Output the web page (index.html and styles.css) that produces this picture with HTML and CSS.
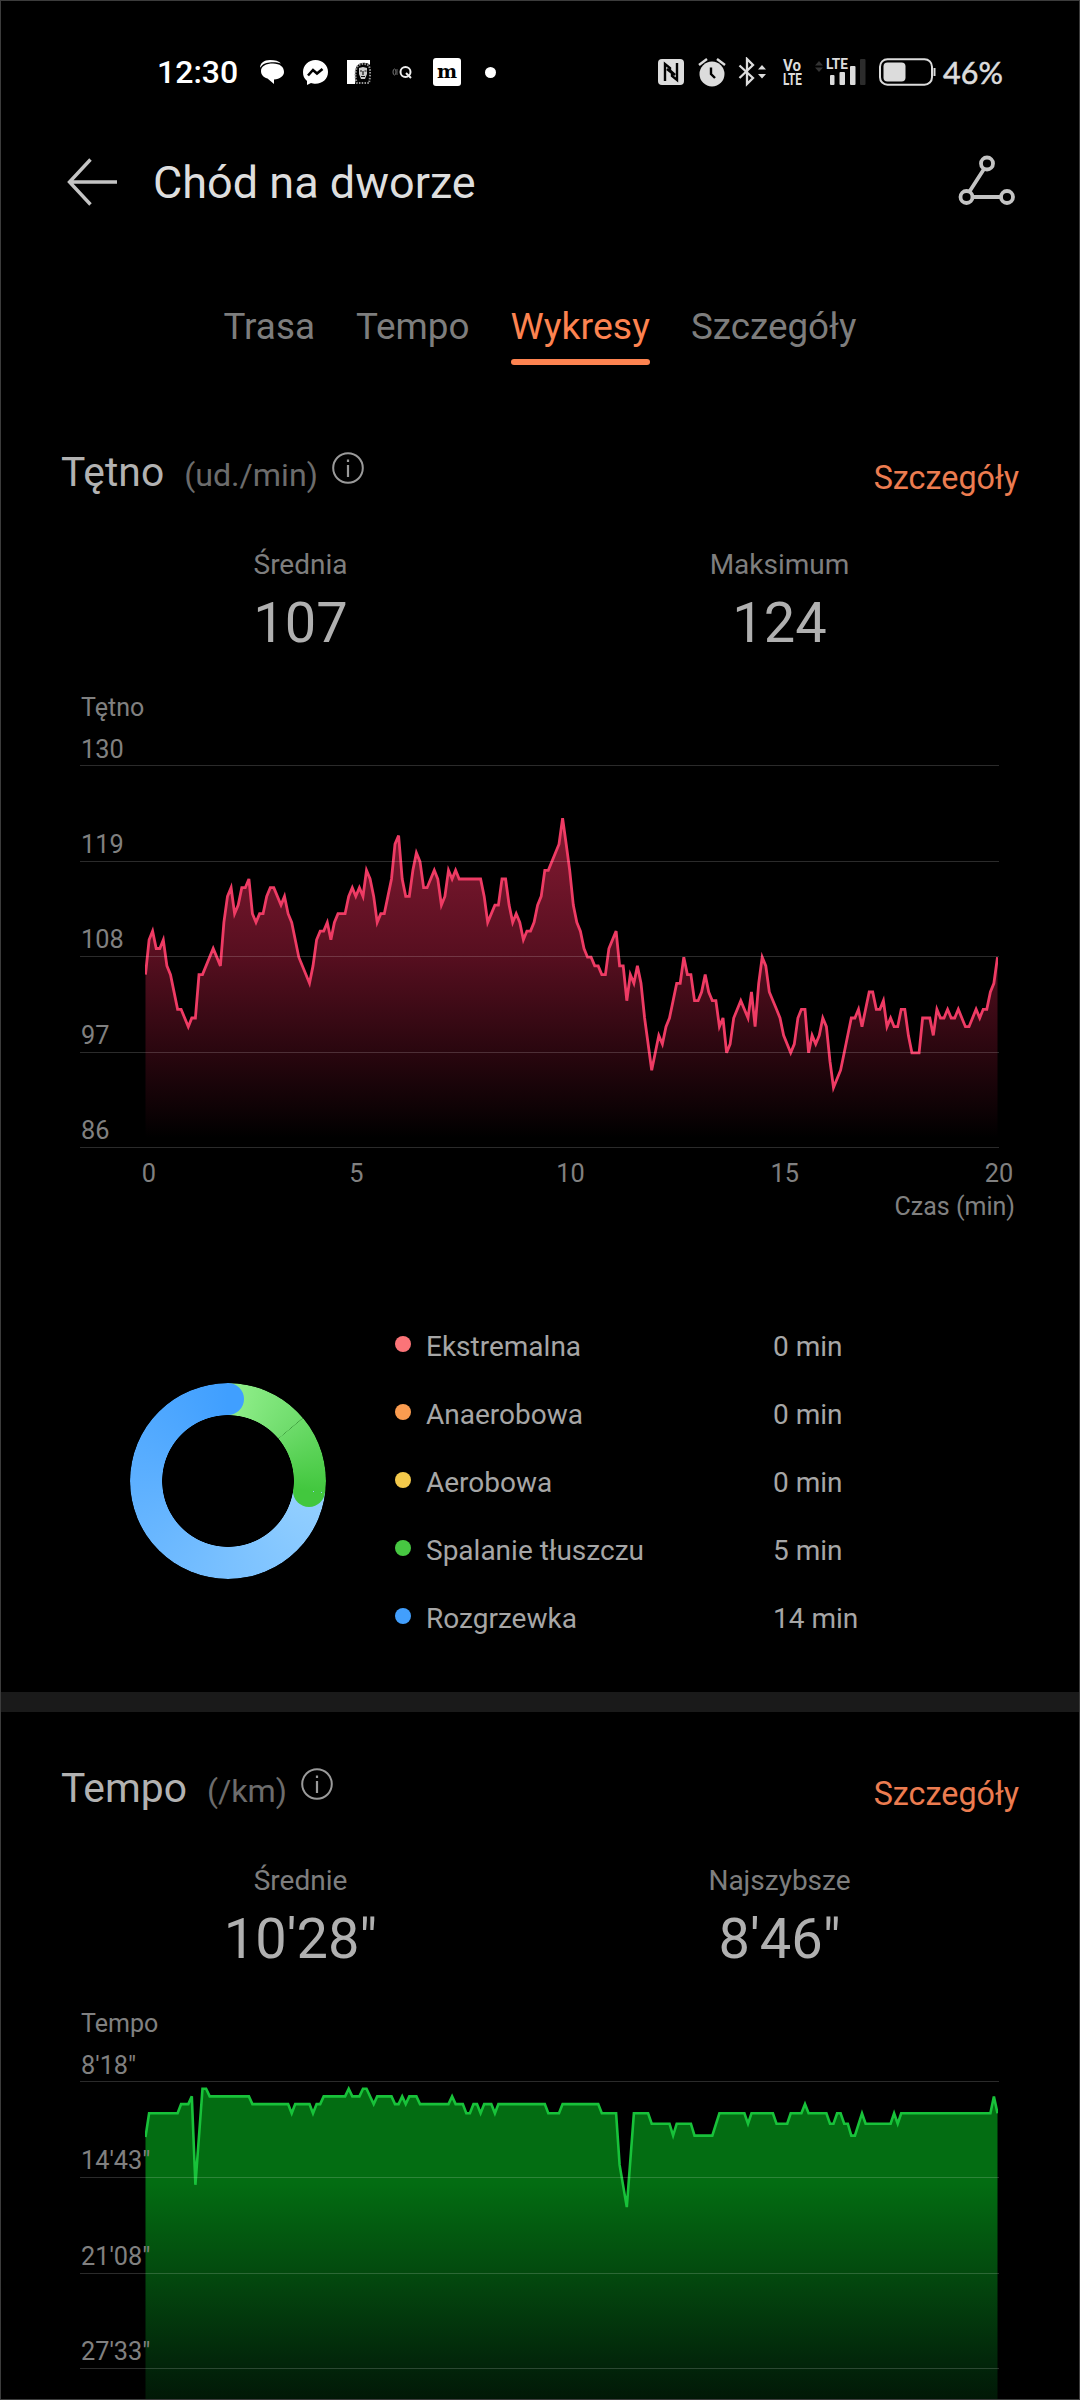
FILE: index.html
```html
<!DOCTYPE html>
<html lang="pl">
<head>
    <meta charset="UTF-8">
    <meta name="viewport" content="width=device-width, initial-scale=1.0">
    <title>Chód na dworze</title>
    <link rel="stylesheet" href="styles.css">
</head>
<body>
    <div class="status-bar">
        <div class="status-left">
            <span class="clock">12:30</span>
            <svg class="ic-chat" width="26" height="26" viewBox="0 0 26 26">
                <path d="M1 9C1 4 5 1 11 1c5 0 9 1 11 3.500C16 2.500 6 3 3 6.500 2 7.500 1.500 8 1 9z" fill="#fff"/>
                <path d="M14 4.500c7 0 11 3.500 11 8.500 0 4-4 7-10 7.500v4.500l-6.500-5.500C4 18 2 15.500 2 12c0-5 5-7.500 12-7.500z" fill="#fff"/>
            </svg>
            <svg class="ic-messenger" width="27" height="27" viewBox="0 0 27 27">
                <path d="M13.500 1C6.500 1 1 6 1 13c0 4 1 6 4 9v4l4-2c1 .5 3 .7 4.500.7C20.500 24.700 26 20 26 13S20.500 1 13.500 1z" fill="#fff"/>
                <path d="M6 16.500l5-5.500 4 3.500 5.500-4.500" fill="none" stroke="#000" stroke-width="2.600"/>
            </svg>
            <svg class="ic-lion" width="25" height="26" viewBox="0 0 25 26">
                <path d="M1 1h23v5c-3-3-10-3-13 1-3 4-1 12-2 18H1z" fill="#fff"/>
                <path d="M11 8c3-4 9-4 12-1 2 5 1 12 0 17H11c-2-5-2-11 0-16z" fill="none" stroke="#999" stroke-width="2" stroke-dasharray="1.500 1.300"/>
                <path d="M13 9l4-1 4 1v6l-2 5h-4l-2-5z" fill="#ccc"/>
                <path d="M14 12h2M18.500 12h2M17 12v4M15 17.500h4" stroke="#111" stroke-width="1.200"/>
            </svg>
            <svg class="ic-cast" width="21" height="14" viewBox="0 0 21 14">
                <ellipse cx="2.500" cy="7" rx="1.500" ry="3" fill="none" stroke="#777"/>
                <path d="M5 4v6" stroke="#666"/>
                <circle cx="13.500" cy="7" r="5" fill="none" stroke="#eee" stroke-width="2"/>
                <path d="M14 8l5 5" stroke="#eee" stroke-width="2"/>
            </svg>
            <svg class="ic-m" width="28" height="28" viewBox="0 0 28 28">
                <rect width="28" height="28" rx="3" fill="#fff"/>
                <text x="14" y="20" text-anchor="middle" class="m-letter">m</text>
            </svg>
            <span class="more-dot"></span>
        </div>
        <div class="status-right">
            <svg width="28" height="28" viewBox="0 0 28 28">
                <rect x="1" y="1" width="26" height="26" rx="4" fill="#dcdcdc"/>
                <path d="M8 23V6l5 4v2.500L18 17M20 5v17l-5-4v-3L10 11" fill="none" stroke="#000" stroke-width="2.400"/>
            </svg>
            <svg class="ic-alarm" width="28" height="29" viewBox="0 0 28 29">
                <circle cx="14" cy="16" r="12.500" fill="#dcdcdc"/>
                <path d="M1 7l8-6M27 7l-8-6" stroke="#dcdcdc" stroke-width="2.400"/>
                <path d="M13 9.500V16l4 4" fill="none" stroke="#000" stroke-width="2.400"/>
            </svg>
            <svg class="ic-bt" width="30" height="30" viewBox="0 0 30 30">
                <path d="M1.500 8.500L15 21l-6 6V2l6 6L1.500 21" fill="none" stroke="#dcdcdc" stroke-width="2.300"/>
                <path d="M20 12.500l4-4.500 4 4.500zM20 17l4 4.500 4-4.500z" fill="#dcdcdc"/>
            </svg>
            <svg class="ic-volte" width="22" height="40" viewBox="0 -6 22 40">
                <text x="1" y="12.500" class="net" textLength="18" lengthAdjust="spacingAndGlyphs">Vo</text>
                <text x="1" y="26.500" class="net" textLength="19" lengthAdjust="spacingAndGlyphs">LTE</text>
            </svg>
            <svg class="ic-signal" width="51" height="40" viewBox="0 -6 51 40">
                <path d="M0 7.500l4-4.500 4 4.500zM0 9.500l4 4.500 4-4.500z" fill="#333"/>
                <text x="11" y="11" class="net lte" textLength="22" lengthAdjust="spacingAndGlyphs">LTE</text>
                <rect x="15" y="17" width="4.500" height="10" rx="1" fill="#dcdcdc"/>
                <rect x="24.500" y="14" width="5.500" height="13" rx="1" fill="#dcdcdc"/>
                <rect x="35" y="8" width="5.500" height="19" rx="1" fill="#dcdcdc"/>
                <rect x="45" y="1" width="5.500" height="26" rx="1" fill="#2c2c2c"/>
            </svg>
            <svg class="ic-battery" width="57" height="28" viewBox="0 0 57 28">
                <rect x="1" y="1.200" width="52" height="25.500" rx="7.500" fill="none" stroke="#dcdcdc" stroke-width="2"/>
                <rect x="4.500" y="4.500" width="22" height="19" rx="4" fill="#dcdcdc"/>
                <path d="M55.500 10v8" stroke="#dcdcdc" stroke-width="2"/>
            </svg>
            <span class="percent">46%</span>
        </div>
    </div>

    <div class="header">
        <svg class="back" width="52" height="50" viewBox="0 0 52 50">
            <path d="M50 25H3M23.500 2.500L2.500 25l21 22.500" fill="none" stroke="#c4c4c4" stroke-width="3.400"/>
        </svg>
        <h1 class="title">Chód na dworze</h1>
        <svg class="route" width="58" height="52" viewBox="0 0 58 52">
            <g fill="none" stroke="#c4c4c4" stroke-width="3.800">
                <circle cx="29" cy="8.500" r="6"/>
                <circle cx="8.500" cy="42" r="6"/>
                <circle cx="49" cy="42" r="6"/>
                <path d="M26 14L11.500 36.500M15 42h28"/>
            </g>
        </svg>
    </div>

    <div class="tabs">
        <div class="tab">Trasa</div>
        <div class="tab">Tempo</div>
        <div class="tab active">Wykresy</div>
        <div class="tab">Szczegóły</div>
    </div>

    <div class="section heart">
        <div class="section-head">
            <h2 class="name">Tętno</h2>
            <span class="unit">(ud./min)</span>
            <svg class="info" width="34" height="34" viewBox="0 0 34 34">
                <circle cx="17" cy="17" r="14.800" fill="none" stroke="#9a9a9a" stroke-width="2"/>
                <path d="M17 14v12M17 8.500v2.500" stroke="#9a9a9a" stroke-width="2.200"/>
            </svg>
            <a class="details">Szczegóły</a>
        </div>
        <div class="stats">
            <div class="stat"><p class="stat-label">Średnia</p><p class="stat-value">107</p></div>
            <div class="stat"><p class="stat-label">Maksimum</p><p class="stat-value">124</p></div>
        </div>
        <div class="chart">
            <p class="chart-title">Tętno</p>
            <div class="plot">
                <svg class="curve" id="heart-curve" width="853" height="383">
                    <defs>
                        <linearGradient id="red" gradientUnits="userSpaceOnUse" x1="0" y1="52" x2="0" y2="372">
                            <stop offset="0" stop-color="#841a32"/>
                            <stop offset="0.42" stop-color="#580f20"/>
                            <stop offset="0.74" stop-color="#28060e"/>
                            <stop offset="1" stop-color="#000"/>
                        </linearGradient>
                    </defs>
                    <polygon fill="url(#red)"/>
                    <polyline fill="none" stroke="#ee3b64" stroke-width="2.800"/>
                </svg>
                <div class="row first">130</div>
                <div class="row">119</div>
                <div class="row">108</div>
                <div class="row">97</div>
                <div class="row">86</div>
            </div>
            <div class="x-axis"><span>0</span><span>5</span><span>10</span><span>15</span><span>20</span></div>
            <p class="x-title">Czas (min)</p>
        </div>
        <div class="zones">
            <div class="donut"></div>
            <div class="legend">
                <div class="zone"><i class="dot extreme"></i><span class="zone-name">Ekstremalna</span><span>0 min</span></div>
                <div class="zone"><i class="dot anaerobic"></i><span class="zone-name">Anaerobowa</span><span>0 min</span></div>
                <div class="zone"><i class="dot aerobic"></i><span class="zone-name">Aerobowa</span><span>0 min</span></div>
                <div class="zone"><i class="dot fat"></i><span class="zone-name">Spalanie tłuszczu</span><span>5 min</span></div>
                <div class="zone"><i class="dot warmup"></i><span class="zone-name">Rozgrzewka</span><span>14 min</span></div>
            </div>
        </div>
    </div>

    <div class="divider"></div>

    <div class="section pace">
        <div class="section-head">
            <h2 class="name">Tempo</h2>
            <span class="unit">(/km)</span>
            <svg class="info" width="34" height="34" viewBox="0 0 34 34">
                <circle cx="17" cy="17" r="14.800" fill="none" stroke="#9a9a9a" stroke-width="2"/>
                <path d="M17 14v12M17 8.500v2.500" stroke="#9a9a9a" stroke-width="2.200"/>
            </svg>
            <a class="details">Szczegóły</a>
        </div>
        <div class="stats">
            <div class="stat"><p class="stat-label">Średnie</p><p class="stat-value">10'28"</p></div>
            <div class="stat"><p class="stat-label">Najszybsze</p><p class="stat-value">8'46"</p></div>
        </div>
        <div class="chart">
            <p class="chart-title">Tempo</p>
            <div class="plot">
                <svg class="curve" id="pace-curve" width="853" height="383">
                    <defs>
                        <linearGradient id="green" gradientUnits="userSpaceOnUse" x1="0" y1="100" x2="0" y2="383">
                            <stop offset="0" stop-color="#036d12"/>
                            <stop offset="0.32" stop-color="#034a0e"/>
                            <stop offset="0.64" stop-color="#02260a"/>
                            <stop offset="1" stop-color="#000"/>
                        </linearGradient>
                    </defs>
                    <polygon fill="url(#green)"/>
                    <polyline fill="none" stroke="#18c23a" stroke-width="2.600"/>
                </svg>
                <div class="row first">8'18"</div>
                <div class="row">14'43"</div>
                <div class="row">21'08"</div>
                <div class="row">27'33"</div>
            </div>
        </div>
    </div>

    <script src="script.js"></script>
</body>
</html>
```
FILE: styles.css
```css
*{
    margin: 0;
    padding: 0;
    box-sizing: border-box;
}
body{
    width: 1080px;
    height: 2400px;
    overflow: hidden;
    border: 1px solid #3c3c3c;
    background-color: #000;
    color: #a6a6a6;
    font-family: Roboto, "Liberation Sans", sans-serif;
    font-size: 28px;
}
svg{
    flex-shrink: 0;
}

/* status bar */
.status-bar{
    height: 142px;
    padding: 0 76px 0 156px;
    display: flex;
    justify-content: space-between;
    align-items: center;
}
.status-left, .status-right{
    display: flex;
    align-items: center;
}
.clock{
    width: 83px;
    color: #fff;
    font-size: 32px;
    font-weight: 500;
}
.ic-chat{
    margin-left: 19px;
}
.ic-messenger{
    margin-left: 17px;
}
.ic-lion{
    margin-left: 17px;
}
.ic-cast{
    margin-left: 21px;
}
.ic-m{
    margin-left: 20px;
}
.m-letter{
    font-family: "DejaVu Serif", serif;
    font-size: 19px;
    font-weight: bold;
}
.more-dot{
    width: 11px;
    height: 11px;
    margin-left: 24px;
    border-radius: 50%;
    background-color: #fff;
}
.net{
    fill: #dcdcdc;
    font-size: 16px;
    font-weight: 700;
}
.lte{
    font-size: 14px;
}
.ic-alarm{
    margin-left: 13px;
}
.ic-bt{
    margin-left: 12px;
}
.ic-volte{
    margin-left: 14px;
}
.ic-signal{
    margin-left: 11px;
}
.ic-battery{
    margin-left: 13px;
}
.percent{
    width: 60px;
    margin-left: 7px;
    color: #dcdcdc;
    font-family: Lato, sans-serif;
    font-size: 30.5px;
    -webkit-text-stroke: 0.5px #dcdcdc;
}

/* title row */
.header{
    height: 82px;
    padding: 0 63px 0 66px;
    display: flex;
    align-items: center;
}
.back{
    margin-top: -4px;
}
.title{
    margin: -3px 0 0 34px;
    color: #dedede;
    font-size: 45px;
    font-weight: 400;
}
.route{
    margin: -6px 0 0 auto;
}

/* tabs */
.tabs{
    margin-top: 75px;
    display: flex;
    justify-content: center;
    gap: 41px;
}
.tab{
    padding-bottom: 6px;
    border-bottom: 6px solid transparent;
    color: #7d7d7d;
    font-size: 36.8px;
    line-height: 53px;
}
.active{
    position: relative;
    color: #fd8350;
    font-size: 37.5px;
}
.active::after{
    content: "";
    position: absolute;
    left: 0;
    right: 0;
    bottom: -6px;
    height: 6px;
    border-radius: 3px;
    background-color: #fd8350;
}

/* sections */
.section{
    margin-top: 77px;
}
.pace{
    margin-top: 46px;
}
.section-head{
    height: 60px;
    padding: 0 60px;
    display: flex;
    align-items: center;
}
.name{
    color: #b2b2b2;
    font-size: 40.8px;
    font-weight: 400;
}
.unit{
    margin-left: 20px;
    padding-top: 6px;
    color: #6c6c6c;
    font-size: 32.2px;
}
.info{
    margin: 0 0 8px 13px;
}
.details{
    margin-left: auto;
    padding-top: 12px;
    color: #ec7c50;
    font-size: 32.3px;
}
.stats{
    margin-top: 43px;
    padding: 0 60px;
    display: grid;
    grid-template-columns: 1fr 1fr;
    text-align: center;
}
.stat-label{
    color: #7e7e7e;
    line-height: 40px;
}
.stat-value{
    color: #b0b0b0;
    font-size: 56px;
    line-height: 77px;
}

/* charts */
.chart{
    margin-top: 29px;
    padding: 0 80px 0 79px;
    color: #808080;
    font-size: 25.3px;
}
.chart-title{
    padding-left: 1px;
    font-size: 25px;
    line-height: 34px;
}
.plot{
    position: relative;
    width: 919px;
}
.curve{
    position: absolute;
    left: 65.400px;
    top: 41px;
}
.row{
    position: relative;
    height: 95.6px;
    padding-left: 1px;
    display: flex;
    align-items: flex-end;
    border-bottom: 1px solid rgba(255,255,255,0.17);
    line-height: 32px;
}
.first{
    height: 41px;
    line-height: 30px;
}
.x-axis{
    width: 887px;
    margin: 10px 0 0 47px;
    display: flex;
    justify-content: space-between;
    line-height: 31px;
}
.x-axis span{
    width: 30px;
    text-align: center;
}
.x-axis span:first-child{
    padding-right: 1px;
    text-align: right;
}
.x-title{
    margin: 2px -16px 0 0;
    font-size: 25px;
    line-height: 32px;
    text-align: right;
}

/* heart rate zones */
.zones{
    margin-top: 89px;
    padding-left: 129px;
    display: flex;
    align-items: center;
}
.donut{
    position: relative;
    width: 196px;
    height: 196px;
    margin-bottom: 3px;
    border-radius: 50%;
    background: conic-gradient(#92f08c 0deg, #6fdc6c 49.600deg, #3f9c3e 49.900deg, #6cdb69 50.300deg, #42c73e 97deg, #94d0ff 97deg, #409fff 360deg);
}
/* the hole and the round ends of both arcs */
.donut{
    -webkit-mask: radial-gradient(circle, transparent 65.500px, #000 66.200px);
    mask: radial-gradient(circle, transparent 65.500px, #000 66.200px);
}
.donut::before, .donut::after{
    content: "";
    position: absolute;
    width: 32px;
    height: 32px;
    border-radius: 50%;
}
.donut::before{
    left: 82px;
    top: 0;
    background: linear-gradient(90deg, transparent 50%, #409fff 50%);
}
.donut::after{
    left: 163.400px;
    top: 92px;
    background: linear-gradient(187deg, transparent 50%, #42c73e 50%);
}
.legend{
    margin-left: 69px;
}
.zone{
    height: 68px;
    display: flex;
    align-items: center;
}
.dot{
    width: 16px;
    height: 16px;
    margin-bottom: 4px;
    border-radius: 50%;
}
.zone-name{
    width: 347px;
    margin-left: 15px;
}
.extreme{
    background-color: #fb7478;
}
.anaerobic{
    background-color: #fa9c50;
}
.aerobic{
    background-color: #f3c94b;
}
.fat{
    background-color: #47c742;
}
.warmup{
    background-color: #429ffd;
}
.divider{
    height: 20px;
    margin-top: 40px;
    background-color: #1a1a1a;
}
```
FILE: script.js
```js
// [sample, value], one sample every 5 seconds, straight line between them
const heart = [
    [0,106],[1,110],[2,111],[3,109],[4,109],[5,110],[6,107],[7,106],[9,102],[10,102],[12,100],[13,101],[14,101],
    [15,106],[16,106],[19,109],[21,107],[22,112],[23,115],[24,116],[25,113],[26,114],[27,116],[28,116],[29,117],
    [30,113],[31,112],[32,113],[33,113],[34,115],[35,116],[36,116],[38,114],[39,115],[40,113],[41,112],[43,108],
    [46,105],[47,107],[48,110],[49,111],[50,111],[51,112],[52,110],[53,112],[54,113],[56,113],[57,115],[58,116],
    [59,115],[60,116],[61,115],[62,118],[63,117],[64,115],[65,112],[66,113],[67,113],[68,115],[69,117],[70,121],
    [71,122],[72,117],[73,115],[74,115],[75,118],[76,120],[77,119],[78,116],[79,116],[81,118],[82,117],[83,114],
    [84,115],[85,118],[86,117],[87,118],[88,117],[94,117],[95,115],[96,112],[98,114],[99,114],[100,117],[101,117],
    [102,114],[103,112],[104,113],[105,112],[106,110],[107,111],[108,111],[109,112],[110,114],[111,115],[112,118],
    [113,118],[116,121],[117,124],[118,121],[119,118],[120,114],[121,112],[122,111],[123,109],[124,108],[125,108],
    [126,107],[127,107],[128,106],[129,106],[130,109],[132,111],[133,107],[134,107],[135,103],[136,106],[137,105],
    [138,107],[139,105],[140,101],[142,95],[144,99],[145,98],[146,100],[147,101],[148,103],[149,105],[150,105],
    [151,108],[152,106],[153,106],[154,103],[155,103],[156,104],[157,106],[158,104],[159,103],[160,103],[161,100],
    [162,101],[163,97],[164,98],[165,101],[167,103],[169,101],[170,104],[171,100],[172,105],[173,108],[174,107],
    [175,104],[177,102],[178,101],[179,99],[181,97],[182,98],[183,101],[184,102],[185,102],[186,97],[187,99],
    [188,98],[189,99],[190,101],[191,100],[192,96],[193,93],[195,95],[196,97],[198,101],[199,101],[200,102],
    [201,100],[202,102],[203,104],[204,104],[205,102],[206,102],[207,103],[208,100],[209,101],[210,100],[211,100],
    [212,102],[213,102],[214,99],[215,97],[217,97],[218,101],[220,101],[221,99],[222,102],[223,101],[224,101],
    [225,102],[226,101],[227,101],[228,102],[230,100],[231,100],[233,102],[234,101],[235,102],[236,102],[237,104],
    [238,105],[239,108]
];
// seconds per km
const pace = [
    [0,720],[1,624],[9,624],[10,587],[12,587],[13,556],[14,912],[16,525],[17,525],[18,556],[29,556],[30,587],
    [40,587],[41,624],[42,587],[46,587],[47,624],[48,587],[49,587],[50,556],[56,556],[57,525],[58,556],[60,556],
    [61,525],[62,525],[64,587],[65,556],[69,556],[70,587],[71,587],[72,556],[73,587],[74,556],[76,556],[77,587],
    [85,587],[86,556],[87,587],[89,587],[90,624],[91,624],[92,587],[93,587],[94,624],[95,587],[97,587],[98,624],
    [99,587],[112,587],[113,624],[116,624],[117,587],[127,587],[128,624],[132,624],[133,832],[135,1002],[137,624],
    [141,624],[142,666],[147,666],[148,714],[149,666],[153,666],[154,714],[159,714],[161,624],[168,624],[169,666],
    [170,624],[176,624],[177,666],[180,666],[181,624],[184,624],[185,587],[186,624],[191,624],[192,666],[193,666],
    [194,624],[195,624],[196,666],[197,666],[198,714],[199,714],[201,624],[202,666],[209,666],[210,624],[211,666],
    [212,624],[237,624],[238,556],[239,624]
];

const drawCurve = (id, data, first, perRow) => {
    const svg = document.getElementById(id);
    const points = data.map(([i, v]) => {
        const x = i * 852 / 239 + 0.5;
        const y = (v - first) / perRow * 95.6;
        return x.toFixed(1) + "," + y.toFixed(1);
    });
    svg.querySelector("polyline").setAttribute("points", points.join(" "));
    svg.querySelector("polygon").setAttribute("points", "0.5,383 " + points.join(" ") + " 852.5,383");
}
drawCurve("heart-curve", heart, 130, -11);
drawCurve("pace-curve", pace, 498, 385);
```
